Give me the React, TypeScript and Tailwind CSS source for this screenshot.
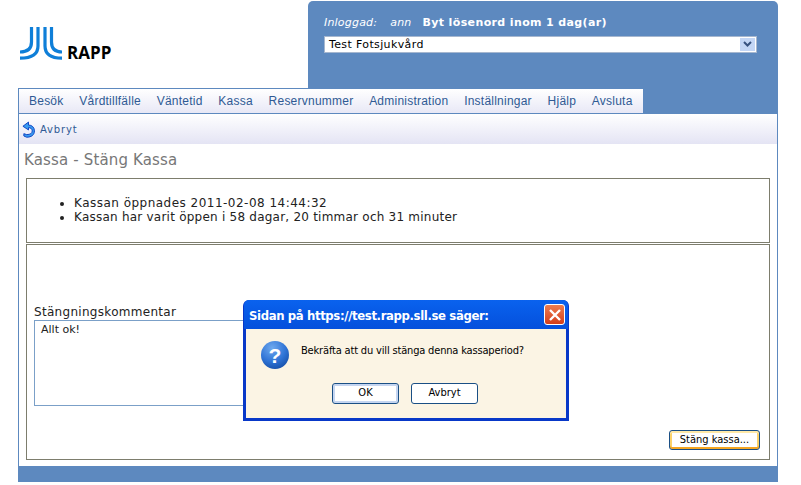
import React from "react";

const nav = ["Besök", "Vårdtillfälle", "Väntetid", "Kassa", "Reservnummer", "Administration", "Inställningar", "Hjälp", "Avsluta"];

function Logo() {
  return (
    <svg width="42" height="33" viewBox="0 0 42 33" fill="none" stroke="#0f7fd8" strokeWidth="3.2">
      <path d="M11.5 0V15Q11.5 25 0 25" />
      <path d="M18 0V19Q18 31.2 0 31.2" />
      <path d="M31.5 0V15Q31.5 25 42 25" />
      <path d="M25 0V19Q25 31.2 42 31.2" />
    </svg>
  );
}

function UndoIcon() {
  return (
    <svg width="13" height="17" viewBox="0 0 14 18" fill="none">
      <path d="M7 1L1 5.5L7 9.5V7C9.5 7 11 8.5 11 10.5C11 13 9 14.5 5 14.5L2 13.5V16L5 17.3C10 17.3 13.4 15 13.4 10.5C13.4 6.5 10.5 4.2 7 4.2Z" fill="#3a9cf0" stroke="#0b3fc0" strokeWidth="1" />
    </svg>
  );
}

function QuestionIcon() {
  return (
    <svg width="30" height="30" viewBox="0 0 30 30" className="shrink-0">
      <defs>
        <radialGradient id="qb" cx="40%" cy="25%" r="80%">
          <stop offset="0" stopColor="#6fa9ee" />
          <stop offset="0.6" stopColor="#2f74d6" />
          <stop offset="1" stopColor="#164fa8" />
        </radialGradient>
      </defs>
      <circle cx="15" cy="15" r="14" fill="url(#qb)" />
      <text x="15" y="22.5" textAnchor="middle" fontFamily="'Liberation Sans', sans-serif" fontWeight="700" fontSize="21" fill="#fff">?</text>
    </svg>
  );
}

export default function App() {
  return (
    <div className="relative h-[485px] w-[801px] overflow-hidden bg-white font-['DejaVu_Sans',sans-serif]">
      <div className="ml-[18px] w-[760px]">
        <header className="flex h-[88px] items-end">
          <div className="flex h-full w-[290px] items-start pl-[2px] pt-[27px]">
            <Logo />
            <span className="ml-[5px] mt-[16px] font-['Open_Sans',sans-serif] text-[17px] font-bold leading-[20px] text-black">RAPP</span>
          </div>
          <div className="h-[87px] w-[470px] rounded-t-[5px] bg-[#5d89bf] pl-[16px] pr-[21px] pt-[14px] text-[11px] text-white">
            <div className="flex h-[16px] items-center leading-[16px]">
              <span className="italic tracking-[0.2px]">Inloggad:</span>
              <span className="ml-[13px] italic tracking-[0.2px]">ann</span>
              <span className="ml-[11px] font-bold tracking-[0.37px]">Byt lösenord inom 1 dag(ar)</span>
            </div>
            <div className="mt-[5px] flex h-[17px] items-center justify-between border border-[#a6b7cf] bg-white pl-[4px] text-[11px] tracking-[0.37px] text-black">
              <span className="mt-[1px]">Test Fotsjukvård</span>
              <span className="m-px flex h-[13px] w-[15px] items-center justify-center bg-[#c3d6f5]">
                <svg width="9" height="7" viewBox="0 0 9 7" fill="none" stroke="#37527f" strokeWidth="2"><path d="M1 1L4.5 4.5L8 1" /></svg>
              </span>
            </div>
          </div>
        </header>

        <div className="flex h-[26px] bg-[#5d89bf] pb-[1px]">
          <nav className="flex w-[625px] items-center gap-[15.75px] border-l border-t border-[#5d89bf] bg-gradient-to-b from-white to-[#e8e8f6] pl-[10px] font-['Liberation_Sans',sans-serif] text-[12px] tracking-[0.23px] text-[#2f5a94]">
            {nav.map((n) => (
              <span key={n}>{n}</span>
            ))}
          </nav>
        </div>

        <main className="h-[352px] border-x border-[#5d89bf]">
          <div className="flex h-[30px] items-center gap-[5px] bg-gradient-to-b from-white to-[#e4e4f4] pl-[3px] text-[10px] tracking-[0.85px] text-[#2f5a94]">
            <UndoIcon />
            <span>Avbryt</span>
          </div>
          <h1 className="mt-[6px] h-[21px] pl-[5px] text-[15px] font-normal leading-[20px] tracking-[0.15px] text-[#777]">Kassa - Stäng Kassa</h1>
          <div className="mx-[7px] mt-[7px] h-[65px] border border-[#7d7d6d] pl-[35px] pt-[17px] text-[12px] leading-[14px] text-[#222]">
            <ul className="list-disc pl-[12px]">
              <li className="tracking-[0.48px]">Kassan öppnades 2011-02-08 14:44:32</li>
              <li className="tracking-[0.23px]">Kassan har varit öppen i 58 dagar, 20 timmar och 31 minuter</li>
            </ul>
          </div>
          <div className="mx-[7px] mt-[1px] flex h-[216px] flex-col border border-[#7d7d6d] px-[7px] pt-[60px] text-[12px] text-[#222]">
            <label className="h-[15px] leading-[15px] tracking-[0.3px]">Stängningskommentar</label>
            <div className="h-[86px] w-[500px] border border-[#7ba0c8] pl-[6px] pt-[1px] text-[11px] leading-[16px]">Allt ok!</div>
            <div className="mr-[2px] mt-[24px] flex justify-end">
              <button className="h-[20px] w-[91px] rounded-[3px] border border-[#1a4f85] bg-white font-['DejaVu_Sans_Condensed',sans-serif] text-[11px] leading-[16px] text-black shadow-[inset_0_-2px_0_#f5a623,inset_0_2px_0_#ffe9a8,inset_2px_0_0_#fbd26a,inset_-2px_0_0_#fbd26a]">Stäng kassa...</button>
            </div>
          </div>
        </main>
        <div className="h-[16px] bg-[#5d89bf]" />
      </div>

      <div className="absolute left-[243px] top-[300px] h-[121px] w-[326px] rounded-t-[6px] bg-[#0838c8] px-[3px] pb-[3px] font-['DejaVu_Sans_Condensed',sans-serif]">
        <div className="-mx-[2px] flex h-[29px] items-center justify-between rounded-t-[5px] bg-gradient-to-b from-[#0a62ee] to-[#0550dc] pl-[5px] pr-[3px]">
          <span className="mt-[2px] text-[13px] font-bold tracking-[-0.38px] text-white">Sidan på https://test.rapp.sll.se säger:</span>
          <span className="flex h-[21px] w-[21px] items-center justify-center rounded-[3px] border border-white bg-gradient-to-b from-[#ec7c50] to-[#d43c18]">
            <svg width="12" height="12" viewBox="0 0 12 12" stroke="#fff" strokeWidth="2.4"><path d="M1 1L11 11M11 1L1 11" /></svg>
          </span>
        </div>
        <div className="h-[89px] bg-[#fbf4e4] pt-[11px] text-[11px] text-black">
          <div className="flex items-start pl-[14px]">
            <QuestionIcon />
            <span className="ml-[11px] mt-[3px] tracking-[-0.17px]">Bekräfta att du vill stänga denna kassaperiod?</span>
          </div>
          <div className="ml-[86px] mt-[13px] flex gap-[12px]">
            <button className="h-[21px] w-[67px] rounded-[3px] border border-[#1a4f85] bg-white text-[11px] shadow-[inset_0_0_0_2px_#c5d5f0]">OK</button>
            <button className="h-[21px] w-[67px] rounded-[3px] border border-[#1a4f85] bg-white text-[11px]">Avbryt</button>
          </div>
        </div>
      </div>
    </div>
  );
}
